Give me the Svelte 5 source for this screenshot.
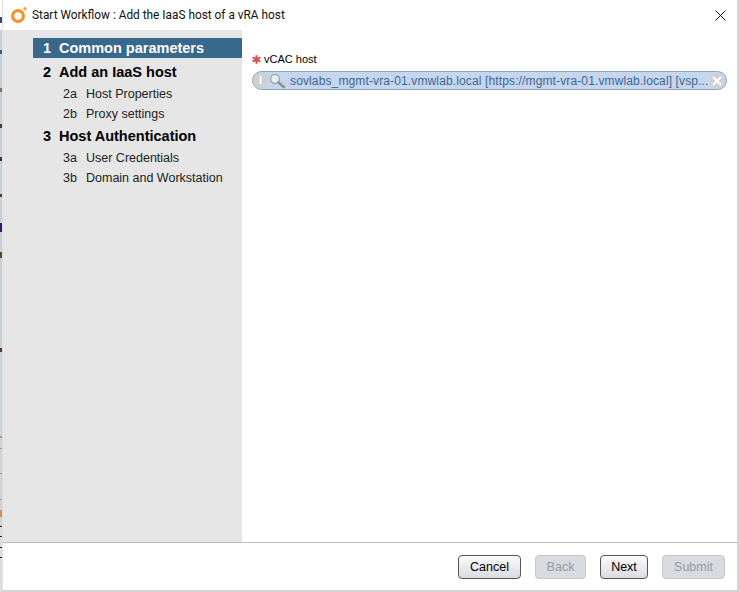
<script>
  const steps = [
    { num: '1', label: 'Common parameters', active: true },
    { num: '2', label: 'Add an IaaS host' },
    { num: '2a', label: 'Host Properties', sub: true },
    { num: '2b', label: 'Proxy settings', sub: true },
    { num: '3', label: 'Host Authentication' },
    { num: '3a', label: 'User Credentials', sub: true },
    { num: '3b', label: 'Domain and Workstation', sub: true }
  ];
</script>

<div class="screen">
  <div class="backdrop"></div>
  <div class="dialog">
    <header class="titlebar">
      <svg class="logo" width="18" height="18" viewBox="0 0 18 18">
        <circle cx="8" cy="10" r="5.4" fill="none" stroke="#f0952a" stroke-width="3.2" />
        <circle cx="15" cy="2.8" r="1.8" fill="#f5a94a" />
      </svg>
      <span class="title">Start Workflow : Add the IaaS host of a vRA host</span>
      <svg class="close" width="11" height="11" viewBox="0 0 11 11">
        <path d="M.5.5l10 10M10.5.5l-10 10" stroke="#111" fill="none" />
      </svg>
    </header>

    <div class="body">
      <nav class="sidebar">
        {#each steps as step}
          <div class="step" class:sub={step.sub} class:active={step.active}>
            <span class="num">{step.num}</span>
            <span>{step.label}</span>
          </div>
        {/each}
      </nav>
      <main class="content">
        <div class="field-label">
          <svg width="9" height="9" viewBox="0 0 9 9">
            <path d="M4.5.3v8.4M.6 2.3l7.8 4.4M8.4 2.3L.6 6.7" stroke="#d6505a" stroke-width="2" fill="none" />
          </svg>
          <span>vCAC host</span>
        </div>
        <div class="picker">
          <span class="info">I</span>
          <svg class="search" width="17" height="16" viewBox="0 0 17 16">
            <circle cx="6" cy="6" r="4.4" fill="#e8edf5" stroke="#a4a8ae" stroke-width="1.5" />
            <path d="M9.5 9.5l5.5 4.5" stroke="#8f8f8f" stroke-width="2.6" stroke-linecap="round" />
          </svg>
          <span class="value">sovlabs_mgmt-vra-01.vmwlab.local [https://mgmt-vra-01.vmwlab.local] [vsp...</span>
          <span class="clear">
            <svg width="10" height="10" viewBox="0 0 10 10">
              <path d="M1 1l8 8M9 1l-8 8" stroke="#fff" stroke-width="2.2" />
            </svg>
          </span>
        </div>
      </main>
    </div>

    <footer class="footer">
      <button class="btn cancel">Cancel</button>
      <button class="btn back" disabled>Back</button>
      <button class="btn next">Next</button>
      <button class="btn submit" disabled>Submit</button>
    </footer>
  </div>
</div>

<style>
  :global(body) {
    margin: 0;
    background: #fff;
  }

  .screen {
    display: flex;
    width: 740px;
    height: 592px;
    overflow: hidden;
    font-family: 'Liberation Sans', Arial, sans-serif;
    color: #000;
  }

  /* sliver of the window behind the dialog */
  .backdrop {
    width: 2px;
    border-right: 1px solid #dfe2e5;
    background: linear-gradient(
      #fff 0 17px, #34506e 17px 23px, #fff 23px 30px,
      #c9d0d6 30px 50px, #44558c 50px 54px, #c9d0d6 54px 88px, #8a6a4a 88px 92px,
      #c9d0d6 92px 124px, #4a3a3a 124px 128px, #c9d0d6 128px 157px, #4a2a4a 157px 161px,
      #c9d0d6 161px 194px, #5a3a2a 194px 197px, #c9d0d6 197px 223px, #3a1a5a 223px 232px,
      #c9d0d6 232px 252px, #5a4a2a 252px 258px, #c9d0d6 258px 348px, #5a3a2a 348px 352px,
      #ccd4dc 352px 436px, #999 436px 438px, #d2d2d2 438px 448px, #999 448px 449px,
      #d2d2d2 449px 473px, #999 473px 474px, #d2d2d2 474px 499px, #999 499px 500px,
      #d2d2d2 500px 510px, #e08a4a 510px 517px, #d2d2d2 517px 526px, #223 526px 527px,
      #ddd 527px 536px, #223 536px 537px, #ddd 537px 547px, #223 547px 548px,
      #ddd 548px 557px, #223 557px 558px, #ddd 558px
    );
  }

  .dialog {
    flex: 1;
    display: flex;
    flex-direction: column;
    background: #fff;
    border-right: 3px solid #d4d4d4;
    border-bottom: 2px solid #d4d4d4;
  }

  .titlebar {
    height: 30px;
    display: flex;
    align-items: center;
    padding: 0 11px 0 7px;
    gap: 4px;
  }

  .logo {
    margin-bottom: 1px;
  }

  .title {
    flex: 1;
    font-family: Roboto, 'Noto Sans', sans-serif;
    font-size: 11.85px;
    color: #111;
  }

  .body {
    flex: 1;
    display: flex;
    min-height: 0;
  }

  .sidebar {
    width: 239px;
    background: #e6e6e6;
    padding-top: 8px;
    box-sizing: border-box;
  }

  .step {
    height: 24px;
    margin-left: 30px;
    padding-left: 10px;
    display: flex;
    align-items: center;
    font-size: 14.5px;
    font-weight: bold;
  }

  .step .num {
    width: 16px;
  }

  .step.active {
    height: 20px;
    margin-bottom: 2px;
    background: #38688b;
    color: #fff;
  }

  .step.sub {
    height: 20px;
    padding-left: 30px;
    font-size: 12.5px;
    font-weight: normal;
    color: #222;
  }

  .step.sub .num {
    width: 23px;
  }

  .content {
    flex: 1;
    padding: 22px 10px 0;
    min-width: 0;
  }

  .field-label {
    display: flex;
    align-items: center;
    gap: 3px;
    height: 14px;
    font-size: 11px;
  }

  .picker {
    display: flex;
    align-items: center;
    height: 17px;
    margin-top: 5px;
    border: 1px solid #8ea2c4;
    border-radius: 10px;
    background: #c6d6ee;
    overflow: hidden;
  }

  .info {
    width: 15px;
    height: 17px;
    border-radius: 9px;
    background: #cdcfd2;
    color: #fff;
    font-size: 11px;
    font-weight: bold;
    text-align: center;
    line-height: 17px;
  }

  .search {
    margin-left: 1px;
  }

  .value {
    flex: 1;
    margin-left: 4px;
    font-size: 12px;
    color: #3f6794;
    white-space: nowrap;
    letter-spacing: 0.13px;
  }

  .clear {
    display: flex;
    align-items: center;
    justify-content: center;
    width: 14px;
    height: 14px;
    margin-right: 2px;
    border-radius: 50%;
    background: #cfcfcf;
  }

  .footer {
    height: 48px;
    box-sizing: border-box;
    border-top: 1px solid #bdbdbd;
    display: flex;
    align-items: center;
    padding: 1px 0 0 455px;
  }

  .btn {
    height: 24px;
    padding: 0;
    border-radius: 4px;
    font-family: 'Liberation Sans', Arial, sans-serif;
    font-size: 12.5px;
    color: #000;
    border: 1px solid #555;
    background: linear-gradient(#fbfbfc, #d9dce2);
  }

  .btn:disabled {
    color: #999;
    border-color: #c4c8ce;
    background: #d8dbe0;
  }

  .cancel { width: 63px; margin-right: 14px; }
  .back { width: 51px; margin-right: 14px; }
  .next { width: 48px; margin-right: 14px; }
  .submit { width: 63px; }
</style>
